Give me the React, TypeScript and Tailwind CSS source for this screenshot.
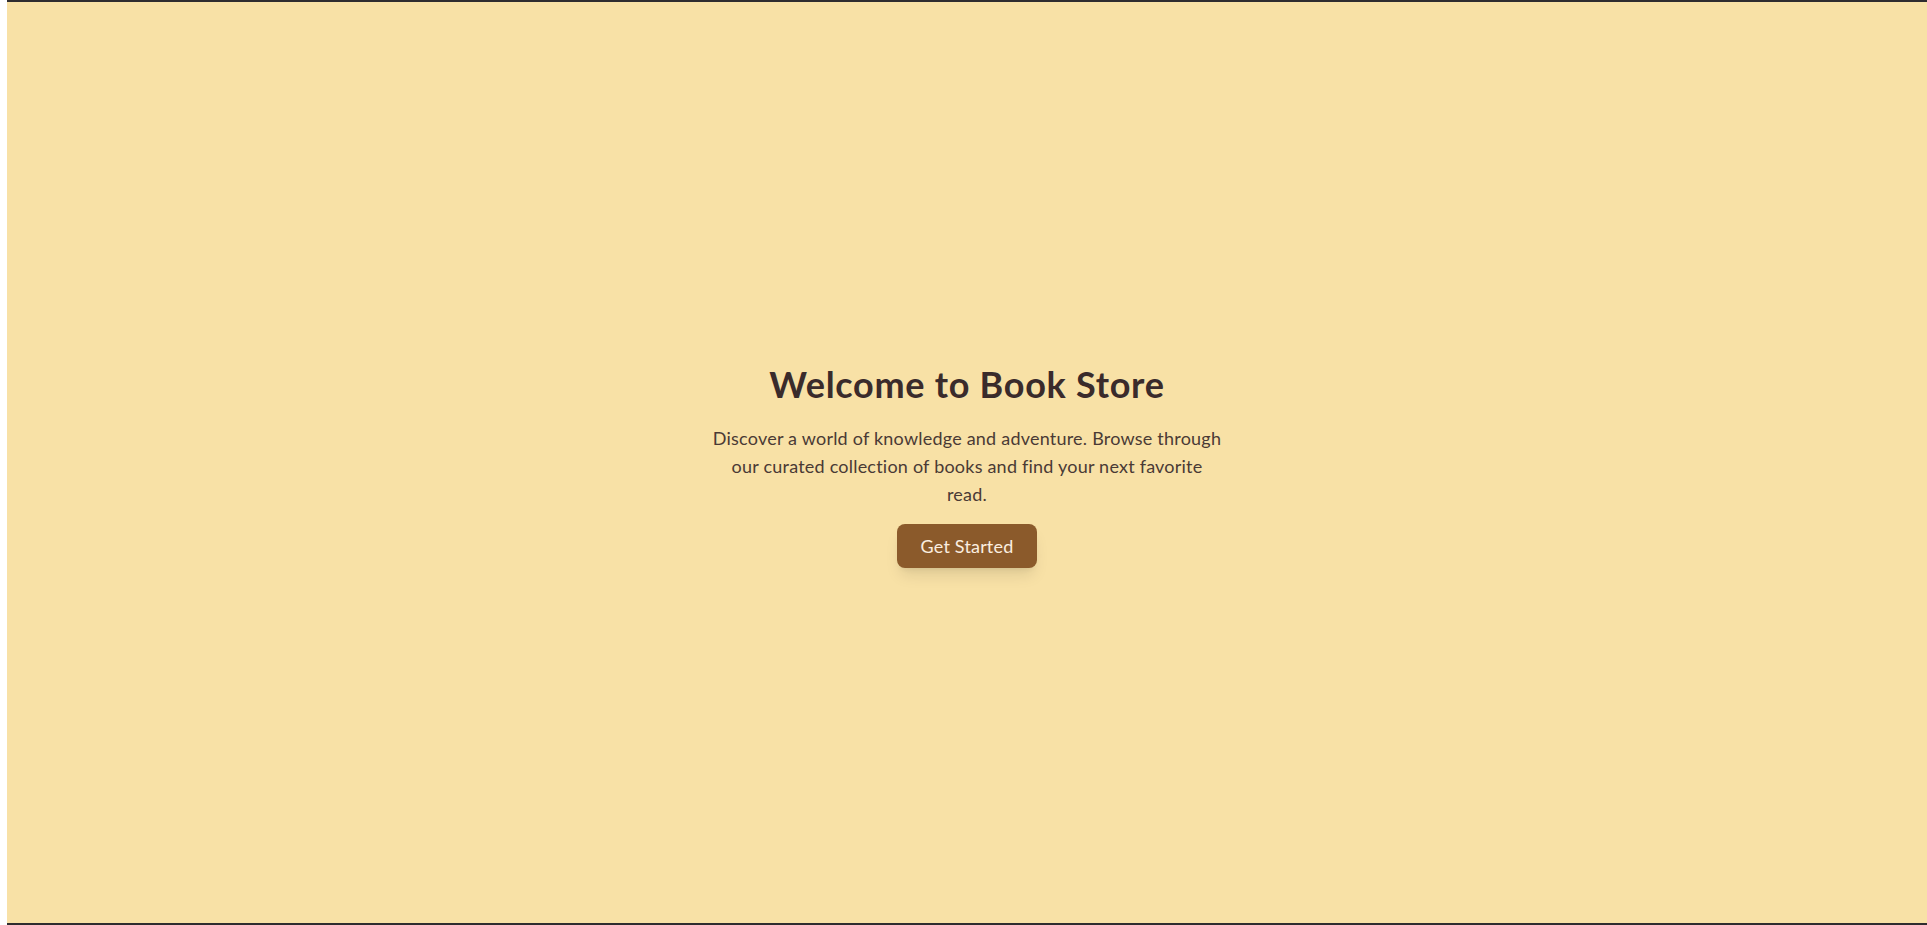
export default function App() {
  return (
    <div className="flex h-[925px] w-full bg-white">
      {/* thin light gutter on the left edge */}
      <div className="w-[7px] shrink-0 bg-white" />
      <main
        className="flex flex-1 flex-col items-center justify-center border-y-2 border-[#2e2c2f] bg-[#f8e1a6] pt-[6px] text-center"
        style={{ fontFamily: 'Lato, "Open Sans", sans-serif' }}
      >
        <h1 className="mb-5 text-4xl font-bold tracking-[0.02em] text-[#3a2b2b]">Welcome to Book Store</h1>
        <p className="max-w-lg text-lg leading-7 tracking-[0.012em] text-[#4a3a35]">
          Discover a world of knowledge and adventure. Browse through our curated collection of books and find your next favorite read.
        </p>
        <button className="mt-4 rounded-lg bg-[#8b5a2b] px-6 py-2 text-lg leading-7 tracking-[0.01em] text-[#fbeee0] shadow-lg">
          Get Started
        </button>
      </main>
    </div>
  );
}
